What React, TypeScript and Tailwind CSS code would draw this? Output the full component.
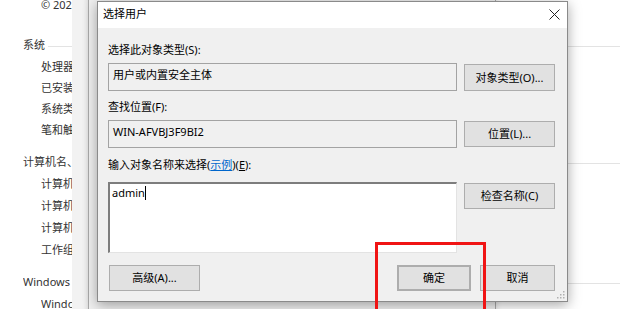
import React from "react";

const F = "font-['Noto_Sans','Noto_Sans_CJK_SC',sans-serif]";

function Header({ text, className = "" }: { text: string; className?: string }) {
  return (
    <div className={`flex items-center h-[22px] ${className}`}>
      <span className="whitespace-nowrap max-w-[49px] overflow-hidden">{text}</span>
      <div className="flex-1 h-px bg-[#e3e3e3] ml-[3px] mt-[3px]" />
    </div>
  );
}

function Item({ text, h = "h-[21px]" }: { text: string; h?: string }) {
  return (
    <div className={`flex items-center ${h} pl-[18px]`}>
      <span className="whitespace-nowrap max-w-[31px] overflow-hidden">{text}</span>
    </div>
  );
}

function Btn({ children, className = "" }: { children: React.ReactNode; className?: string }) {
  return (
    <div
      className={`flex items-center justify-center bg-[#e1e1e1] border border-[#adadad] text-[11px] leading-[16px] text-black ${className}`}
    >
      {children}
    </div>
  );
}

export default function App() {
  return (
    <div className={`relative w-[620px] h-[309px] overflow-hidden bg-white ${F} text-[11px] leading-[16px] text-[#333]`}>
      {/* background settings page */}
      <div className="flex flex-col pl-[23px] -mt-[6px]">
        <Item text="© 2023 Microsoft Corporation。保留所有权利。" />
        <Header text="系统" className="mt-[19px]" />
        <Item text="处理器:" />
        <Item text="已安装的内存(RAM):" />
        <Item text="系统类型:" />
        <Item text="笔和触控:" />
        <Header text="计算机名、域和工作组设置" className="mt-[11px]" />
        <Item text="计算机名:" h="h-[22px]" />
        <Item text="计算机全名:" h="h-[22px]" />
        <Item text="计算机描述:" h="h-[22px]" />
        <Item text="工作组:" h="h-[22px]" />
        <Header text="Windows 激活" className="mt-[10px]" />
        <Item text="Windows 已激活" h="h-[22px]" />
      </div>

      {/* strip and window behind */}
      <div className="absolute left-[72px] top-0 w-[16px] h-[309px] bg-[#f2f2f2]" />
      <div className="absolute left-[88px] top-[-10px] w-[408px] h-[330px] bg-[#f0f0f0] border-l border-r border-[#a8a8a8] shadow-[0_0_6px_rgba(0,0,0,0.15)]" />

      {/* dialog */}
      <div className="absolute left-[97px] top-[1px] w-[471px] h-[301px] border border-[#8a8a8a] bg-[#f0f0f0] shadow-[0_3px_12px_rgba(0,0,0,0.35)] flex flex-col text-black">
        <div className="h-[26px] bg-white flex items-start justify-between pl-[5px] pt-[4px]">
          <span>选择用户</span>
          <svg width="11" height="11" viewBox="0 0 11 11" className="mr-[7px] mt-[3px]">
            <path d="M0.5 0.5 L10.5 10.5 M10.5 0.5 L0.5 10.5" stroke="#222" strokeWidth="1" />
          </svg>
        </div>
        <div className="flex-1 flex flex-col pl-[10px] pr-[11px] pt-[14px]">
          <div>选择此对象类型(<span>S</span>):</div>
          <div className="flex items-start gap-[7px] mt-[5px]">
            <div className="w-[349px] h-[28px] border border-[#a3a3a3] bg-[#f0f0f0] pl-[4px] pt-[3px]">用户或内置安全主体</div>
            <Btn className="w-[91px] h-[27px] mt-[1px]">对象类型(O)...</Btn>
          </div>

          <div className="mt-[8px]">查找位置(F):</div>
          <div className="flex items-start gap-[7px] mt-[5px]">
            <div className="w-[349px] h-[28px] border border-[#a3a3a3] bg-[#f0f0f0] pl-[4px] pt-[3px]">WIN-AFVBJ3F9BI2</div>
            <Btn className="w-[91px] h-[26px] mt-[1px]">位置(L)...</Btn>
          </div>

          <div className="mt-[9px]">
            输入对象名称来选择(<span className="text-[#0066cc] underline">示例</span>)(<span className="underline">E</span>):
          </div>
          <div className="flex items-start gap-[7px] mt-[9px]">
            <div className="w-[349px] h-[71px] bg-white border-t-2 border-l-2 border-r border-b border-t-[#7d7d7d] border-l-[#7d7d7d] border-r-[#e3e3e3] border-b-[#e3e3e3] pl-[2px] pt-[1px] flex items-start">
              <span>admin</span>
              <span className="inline-block w-px h-[14px] bg-black mt-[1px]" />
            </div>
            <Btn className="w-[91px] h-[26px] mt-[1px]">检查名称(C)</Btn>
          </div>

          <div className="flex items-start mt-[12px] pl-[1px] pr-[1px]">
            <Btn className="w-[91px] h-[26px]">高级(A)...</Btn>
            <div className="flex-1" />
            <Btn className="w-[74px] h-[26px] border-2 border-[#0078d7]">确定</Btn>
            <Btn className="w-[75px] h-[26px] ml-[9px]">取消</Btn>
          </div>
        </div>
        <svg width="8" height="8" viewBox="0 0 8 8" className="absolute right-[2px] bottom-[2px]">
          <rect x="6" y="0" width="1.5" height="1.5" fill="#b0b0b0" />
          <rect x="3" y="3" width="1.5" height="1.5" fill="#b0b0b0" />
          <rect x="6" y="3" width="1.5" height="1.5" fill="#b0b0b0" />
          <rect x="0" y="6" width="1.5" height="1.5" fill="#b0b0b0" />
          <rect x="3" y="6" width="1.5" height="1.5" fill="#b0b0b0" />
          <rect x="6" y="6" width="1.5" height="1.5" fill="#b0b0b0" />
        </svg>
      </div>

      {/* red highlight */}
      <div className="absolute left-[375px] top-[242px] w-[111px] h-[80px] border-[3px] border-[#f01414]" />
    </div>
  );
}
